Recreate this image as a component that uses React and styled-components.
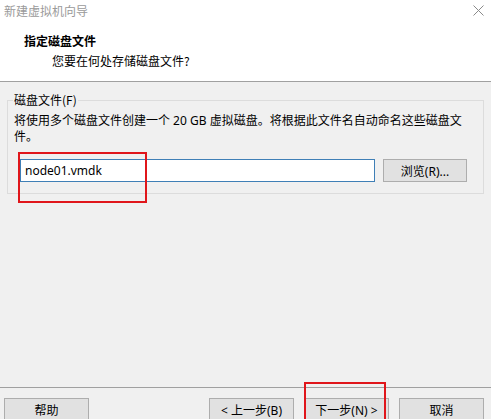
import React from "react";
import styled, { createGlobalStyle } from "styled-components";

const Global = createGlobalStyle`
  html, body { margin: 0; padding: 0; }
  body { font-family: "Noto Sans", "Noto Sans CJK SC", sans-serif; font-size: 12px; color: #000; }
`;

const Window = styled.div`
  position: relative;
  width: 491px;
  height: 419px;
  overflow: hidden;
  background: #f0f0f0;
  display: flex;
  flex-direction: column;
`;

const Header = styled.div`
  height: 82px;
  flex: none;
  box-sizing: border-box;
  background: #fff;
  border-bottom: 1px solid #a0a0a0;
  display: flex;
  flex-direction: column;
`;

const TitleBar = styled.div`
  height: 21px;
  display: flex;
  align-items: center;
  justify-content: space-between;
  padding: 0 7px 0 4px;
  color: #9a9a9a;
  font-family: "Noto Sans CJK SC", sans-serif;
  font-size: 12px;
`;

const Heading = styled.div`
  margin: 13px 0 0 24px;
  font-family: "Noto Sans CJK SC", sans-serif;
  font-weight: 700;
  font-size: 12px;
  line-height: 14px;
`;

const SubHeading = styled.div`
  margin: 6px 0 0 52px;
  font-family: "Noto Sans CJK SC", sans-serif;
  font-size: 12px;
  line-height: 14px;
`;

const Body = styled.div`
  flex: 1;
  padding-top: 11px;
`;

const Group = styled.fieldset`
  margin: 0 7px;
  padding: 0 6px 11px 6px;
  border: 1px solid #dcdcdc;
  min-width: 0;
`;

const Legend = styled.legend`
  padding: 0 1px;
  margin-left: -1px;
  font-family: "Noto Sans CJK SC", sans-serif;
  font-size: 12px;
  line-height: 14px;
`;

const Description = styled.div`
  margin-top: 6px;
  font-family: "Noto Sans", "Noto Sans CJK SC", sans-serif;
  font-size: 12px;
  line-height: 16px;
  white-space: nowrap;
`;

const FileRow = styled.div`
  margin: 14px 0 0 6px;
  display: flex;
  align-items: center;
  gap: 8px;
`;

const PathInput = styled.input`
  width: 355px;
  height: 23px;
  box-sizing: border-box;
  border: 1px solid #3f7fb6;
  background: #fff;
  padding: 0 4px;
  font-family: "Noto Sans", sans-serif;
  font-size: 12px;
  color: #000;
  outline: none;
`;

const Button = styled.button`
  width: ${(p) => p.$w || 85}px;
  height: 23px;
  flex: none;
  box-sizing: border-box;
  background: #e1e1e1;
  border: 1px solid #adadad;
  padding: 0;
  font-family: "Noto Sans", "Noto Sans CJK SC", sans-serif;
  font-size: 12px;
  color: #000;
  display: flex;
  align-items: center;
  justify-content: center;
`;

const Footer = styled.div`
  flex: none;
  box-sizing: border-box;
  height: 32px;
  border-top: 1px solid #a0a0a0;
  padding: 10px 7px 0 4px;
  display: flex;
  align-items: flex-start;
`;

const Spacer = styled.div`
  flex: 1;
`;

const ButtonGroup = styled.div`
  display: flex;
  gap: ${(p) => p.$gap}px;
  margin-left: ${(p) => p.$ml || 0}px;
`;

const Highlight = styled.div`
  position: absolute;
  left: ${(p) => p.$x}px;
  top: ${(p) => p.$y}px;
  width: ${(p) => p.$w}px;
  height: ${(p) => p.$h}px;
  box-sizing: border-box;
  border: 2px solid #e0161b;
  pointer-events: none;
`;

const CloseIcon = () => (
  <svg width="11" height="11" viewBox="0 0 11 11">
    <path d="M0.5 0.5 L10.5 10.5 M10.5 0.5 L0.5 10.5" stroke="#8a8a8a" strokeWidth="1" fill="none" />
  </svg>
);

export default function App() {
  return (
    <>
      <Global />
      <Window>
        <Header>
          <TitleBar>
            <span>新建虚拟机向导</span>
            <CloseIcon />
          </TitleBar>
          <Heading>指定磁盘文件</Heading>
          <SubHeading>您要在何处存储磁盘文件?</SubHeading>
        </Header>
        <Body>
          <Group>
            <Legend>磁盘文件(F)</Legend>
            <Description>
              将使用多个磁盘文件创建一个 20 GB 虚拟磁盘。将根据此文件名自动命名这些磁盘文
              <br />
              件。
            </Description>
            <FileRow>
              <PathInput defaultValue="node01.vmdk" />
              <Button $w={84}>浏览(R)...</Button>
            </FileRow>
          </Group>
        </Body>
        <Footer>
          <Button>帮助</Button>
          <Spacer />
          <ButtonGroup $gap={10}>
            <Button>&lt; 上一步(B)</Button>
            <Button>下一步(N) &gt;</Button>
          </ButtonGroup>
          <ButtonGroup $gap={0} $ml={10}>
            <Button>取消</Button>
          </ButtonGroup>
        </Footer>
        <Highlight $x={18} $y={152} $w={129} $h={51} />
        <Highlight $x={304} $y={382} $w={82} $h={40} />
      </Window>
    </>
  );
}
